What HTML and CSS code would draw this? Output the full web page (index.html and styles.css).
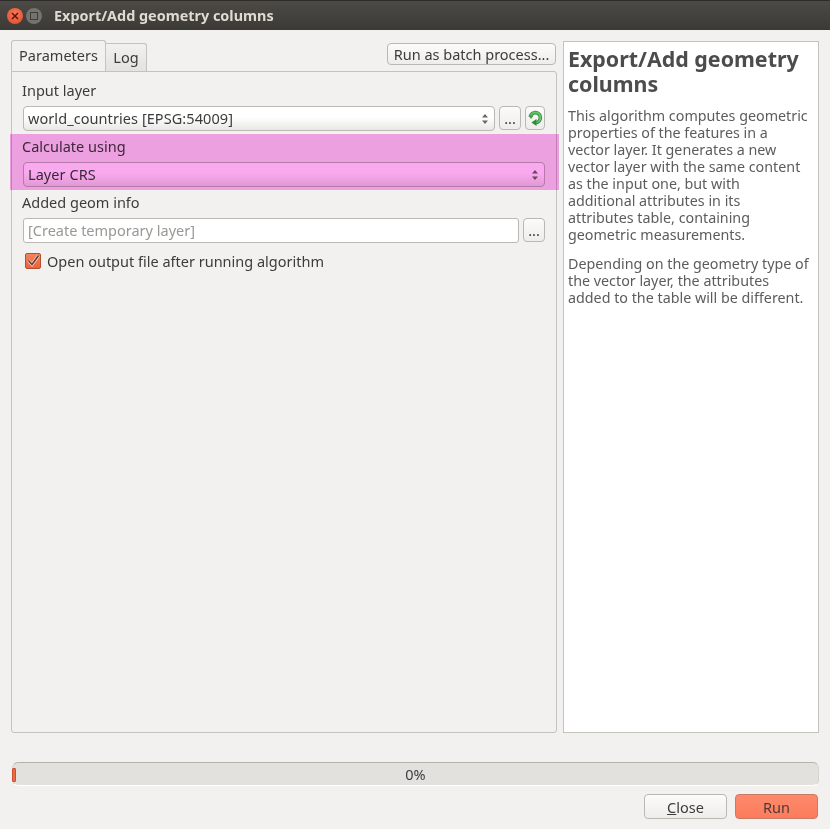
FILE: index.html
```html
<!DOCTYPE html>
<html lang="en">
<head>
    <meta charset="UTF-8">
    <meta name="viewport" content="width=device-width, initial-scale=1.0">
    <title>Export/Add geometry columns</title>
    <link rel="stylesheet" href="styles.css">
</head>
<body>
    <div class="titlebar">
        <span class="win-btn win-close">
            <svg width="8" height="8" viewBox="0 0 8 8"><path d="M1 1L7 7M7 1L1 7" stroke="#5e1408" stroke-width="1.5"/></svg>
        </span>
        <span class="win-btn win-max"><span class="win-max-box"></span></span>
        <span class="win-title">Export/Add geometry columns</span>
    </div>

    <div class="main">
        <div class="left">
            <div class="tab-row">
                <div class="tab tab-active">Parameters</div>
                <div class="tab">Log</div>
                <button class="btn batch-btn">Run as batch process...</button>
            </div>
            <div class="pane">
                <div class="field-label">Input layer</div>
                <div class="field-row">
                    <div class="combo">
                        <span>world_countries [EPSG:54009]</span>
                        <svg class="spin" width="8" height="14" viewBox="0 0 8 14"><path d="M4 2L7 5.5H1ZM4 12L1 8.5H7Z" fill="#6a6864"/></svg>
                    </div>
                    <button class="btn small-btn">...</button>
                    <button class="btn small-btn icon-btn">
                        <svg width="16" height="17" viewBox="0 0 16 17">
                            <path d="M3.4 7A5 5 0 1 1 8.5 12.6" fill="none" stroke="#2f8a3c" stroke-width="3.6"/>
                            <path d="M3.4 7A5 5 0 1 1 8.5 12.6" fill="none" stroke="#66c46c" stroke-width="2"/>
                            <path d="M1.5 5.5H6.5L4 9Z" fill="#3f9e4a"/>
                            <path d="M9.5 9V16L4.5 12.5Z" fill="#2f8a3c"/>
                        </svg>
                    </button>
                </div>
                <div class="field-label">Calculate using</div>
                <div class="field-row">
                    <div class="combo">
                        <span>Layer CRS</span>
                        <svg class="spin" width="8" height="14" viewBox="0 0 8 14"><path d="M4 2L7 5.5H1ZM4 12L1 8.5H7Z" fill="#6a6864"/></svg>
                    </div>
                </div>
                <div class="field-label">Added geom info</div>
                <div class="field-row">
                    <div class="text-input">[Create temporary layer]</div>
                    <button class="btn small-btn">...</button>
                </div>
                <label class="check-row">
                    <span class="checkbox">
                        <svg width="14" height="14" viewBox="0 0 14 14">
                            <path d="M2.5 6.5L6 10.5L12.5 1.5" fill="none" stroke="#fbd9cb" stroke-width="3"/>
                            <path d="M2.5 6.5L6 10.5L12.5 1.5" fill="none" stroke="#6b3a2c" stroke-width="1.6"/>
                        </svg>
                    </span>
                    Open output file after running algorithm
                </label>
                <div class="highlight"></div>
            </div>
        </div>
        <div class="help">
            <h2>Export/Add geometry columns</h2>
            <p>This algorithm computes geometric<br>properties of the features in a<br>vector layer. It generates a new<br>vector layer with the same content<br>as the input one, but with<br>additional attributes in its<br>attributes table, containing<br>geometric measurements.</p>
            <p>Depending on the geometry type of<br>the vector layer, the attributes<br>added to the table will be different.</p>
        </div>
    </div>

    <div class="progress">
        <div class="progress-fill"></div>
        <span>0%</span>
    </div>

    <div class="footer">
        <button class="btn foot-btn"><span class="ul">C</span>lose</button>
        <button class="btn foot-btn run-btn">Run</button>
    </div>
</body>
</html>
```

FILE: styles.css
```css
html, body {
    margin: 0;
    padding: 0;
}
body {
    width: 830px;
    height: 829px;
    overflow: hidden;
    background-color: #f2f1f0;
    color: #3c3c3c;
    font-family: "Noto Sans", "Open Sans", sans-serif;
    font-size: 14.5px;
}
.titlebar {
    height: 30px;
    display: flex;
    align-items: center;
    padding-left: 7px;
    background: linear-gradient(#4b4a45, #3b3a36);
    border-top: 1px solid #2e2d2a;
    box-sizing: border-box;
}
.win-btn {
    width: 16px;
    height: 16px;
    border-radius: 50%;
    display: flex;
    align-items: center;
    justify-content: center;
    margin-right: 3px;
}
.win-close {
    background: radial-gradient(circle at 50% 35%, #f7785a, #df4a26);
}
.win-max {
    background: #75736d;
}
.win-max-box {
    width: 6px;
    height: 6px;
    border: 1px solid #3d3c38;
}
.win-title {
    margin-left: 9px;
    font-weight: bold;
    font-size: 14.4px;
    color: #dfdbd2;
}
.main {
    display: flex;
    height: 692px;
    padding: 11px 11px 0 11px;
    gap: 6px;
}
.left {
    width: 546px;
    display: flex;
    flex-direction: column;
}
.tab-row {
    height: 30px;
    display: flex;
    align-items: flex-end;
    position: relative;
    z-index: 1;
}
.tab {
    height: 28px;
    line-height: 27px;
    width: 41px;
    text-align: center;
    box-sizing: border-box;
    border: 1px solid #c4c2bd;
    border-bottom: none;
    border-left: none;
    border-radius: 0 3px 0 0;
    background: linear-gradient(#f2f1f0, #e4e2df);
}
.tab-active {
    height: 31px;
    line-height: 29px;
    width: 95px;
    border-left: 1px solid #c4c2bd;
    border-radius: 3px 3px 0 0;
    background: #f2f1f0;
}
.btn {
    font-family: inherit;
    font-size: 14.5px;
    color: #3c3c3c;
    border: 1px solid #bab8b3;
    border-radius: 4px;
    background: linear-gradient(#fbfbfa, #eeedeb);
    padding: 0;
}
.batch-btn {
    width: 169px;
    height: 22px;
    margin-left: auto;
    margin-right: 1px;
    margin-bottom: 6px;
    line-height: 19px;
}
.pane {
    flex: 1;
    position: relative;
    border: 1px solid #c4c2bd;
    border-radius: 0 3px 3px 3px;
    padding: 9px 11px 0 11px;
}
.field-label {
    height: 19px;
    line-height: 19px;
    margin-bottom: 6px;
    margin-left: -1px;
}
.field-row {
    display: flex;
    gap: 4px;
    height: 25px;
    margin-bottom: 6px;
}
.combo {
    flex: 1;
    height: 25px;
    box-sizing: border-box;
    border: 1px solid #bab8b3;
    border-radius: 4px;
    background: linear-gradient(#ffffff 45%, #e8e7e4);
    display: flex;
    align-items: center;
    justify-content: space-between;
    padding: 0 5px 2px 4px;
}
.combo span {
    letter-spacing: 0.07px;
}
.spin {
    margin-top: 2px;
}
.small-btn {
    width: 22px;
    height: 24px;
    line-height: 18px;
}
.icon-btn {
    width: 20px;
    display: flex;
    align-items: center;
    justify-content: center;
}
.text-input {
    flex: 1;
    height: 25px;
    line-height: 23px;
    box-sizing: border-box;
    border: 1px solid #bab8b3;
    border-radius: 3px;
    background: #fff;
    color: #9a9894;
    padding-left: 4px;
}
.check-row {
    display: flex;
    align-items: center;
    gap: 6px;
    height: 18px;
    margin-top: 9px;
    padding-left: 2px;
}
.checkbox {
    width: 14px;
    height: 14px;
    border: 1px solid #b5502f;
    border-radius: 2px;
    background: linear-gradient(#f5825e, #e9633d);
    display: flex;
}
.highlight {
    position: absolute;
    left: -2px;
    top: 62px;
    width: 549px;
    height: 56px;
    background: #f9a9ee;
    mix-blend-mode: multiply;
}
.help {
    width: 256px;
    box-sizing: border-box;
    background: #fff;
    border: 1px solid #c4c2bd;
    padding: 4px 4px 0 4px;
    font-size: 14.3px;
    line-height: 17px;
    color: #5c5c5c;
}
.help h2 {
    margin: 0 0 11px 0;
    font-size: 21.4px;
    line-height: 25px;
    font-weight: bold;
    color: #4c4c4c;
}
.help p {
    margin: 0 0 12px 0;
}
.progress {
    margin: 29px 0 0 12px;
    width: 807px;
    height: 24px;
    box-sizing: border-box;
    position: relative;
    display: flex;
    align-items: center;
    justify-content: center;
    background: #e3e1de;
    border: 1px solid #d6d4d0;
    border-top-color: #b5b3ae;
    border-bottom-color: #fff;
    border-radius: 6px;
}
.progress-fill {
    position: absolute;
    left: -1px;
    top: 5px;
    width: 2px;
    height: 12px;
    background: #ef6a42;
    border: 1px solid #c9502c;
    border-radius: 1px;
}
.footer {
    display: flex;
    justify-content: flex-end;
    gap: 8px;
    padding: 8px 12px 0 0;
}
.foot-btn {
    width: 83px;
    height: 25px;
}
.ul {
    text-decoration: underline;
}
.run-btn {
    background: linear-gradient(#fd8a6c, #fb7c5c);
    border-color: #c97a62;
    color: #4d3a35;
}
```
